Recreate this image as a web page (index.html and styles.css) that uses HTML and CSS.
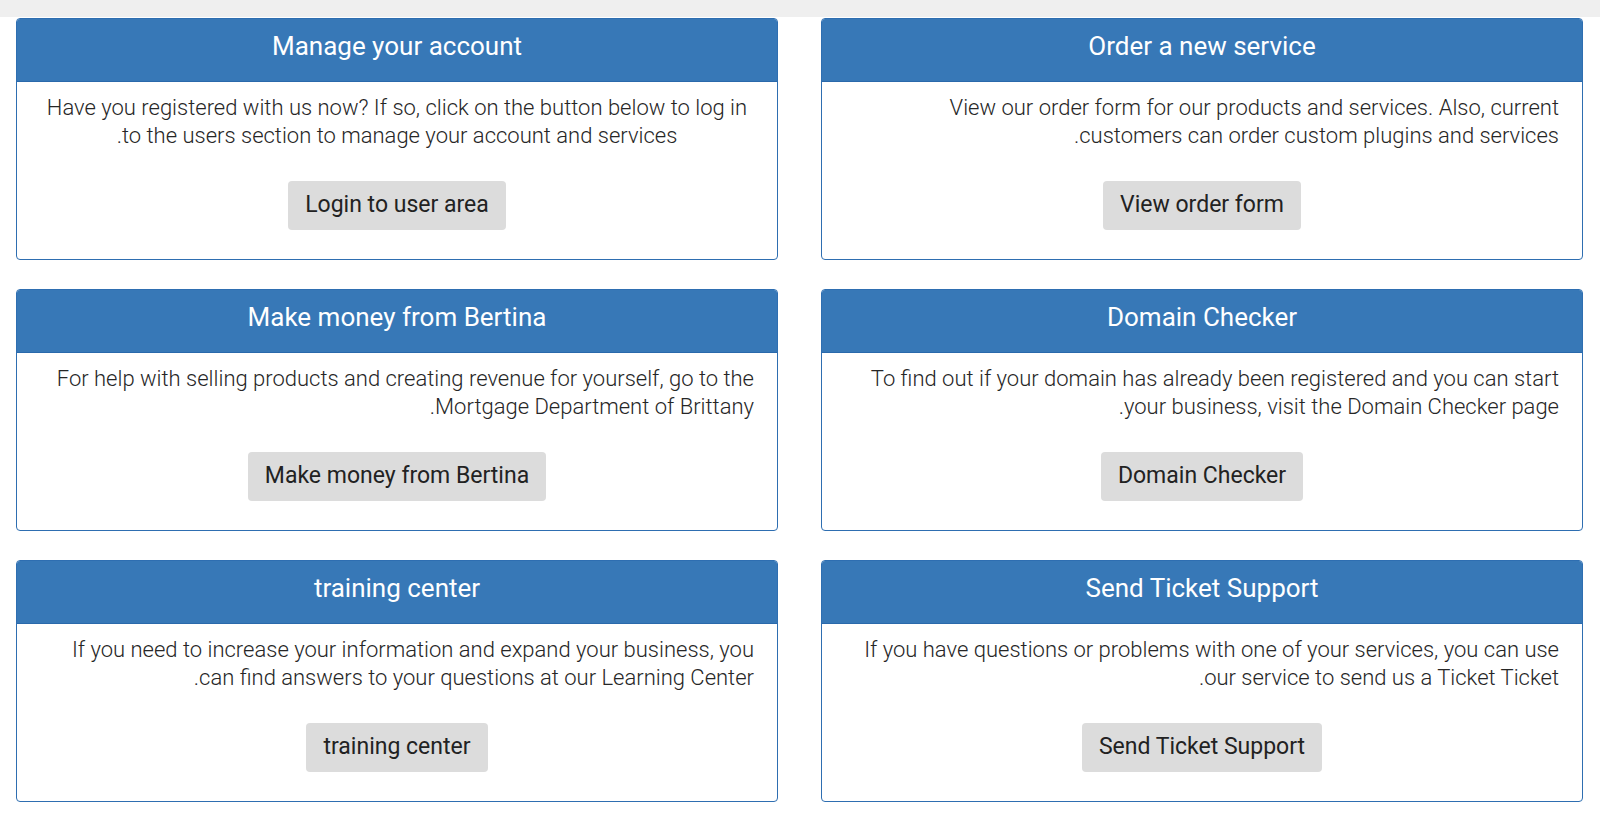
FILE: index.html
```html
<!DOCTYPE html>
<html lang="en">
<head>
<meta charset="utf-8">
<title>Services</title>
<link rel="stylesheet" href="styles.css">
</head>
<body>
<div class="topbar"></div>
<main class="grid">
  <section class="card">
    <h2 class="card-title">Manage your account</h2>
    <div class="card-body">
      <p class="card-text center">Have you registered with us now? If so, click on the button below to log in to the users section to manage your account and services.</p>
      <button class="btn">Login to user area</button>
    </div>
  </section>
  <section class="card">
    <h2 class="card-title">Order a new service</h2>
    <div class="card-body">
      <p class="card-text">View our order form for our products and services. Also, current customers can order custom plugins and services.</p>
      <button class="btn">View order form</button>
    </div>
  </section>
  <section class="card">
    <h2 class="card-title">Make money from Bertina</h2>
    <div class="card-body">
      <p class="card-text">For help with selling products and creating revenue for yourself, go to the Mortgage Department of Brittany.</p>
      <button class="btn">Make money from Bertina</button>
    </div>
  </section>
  <section class="card">
    <h2 class="card-title">Domain Checker</h2>
    <div class="card-body">
      <p class="card-text">To find out if your domain has already been registered and you can start your business, visit the Domain Checker page.</p>
      <button class="btn">Domain Checker</button>
    </div>
  </section>
  <section class="card">
    <h2 class="card-title">training center</h2>
    <div class="card-body">
      <p class="card-text">If you need to increase your information and expand your business, you can find answers to your questions at our Learning Center.</p>
      <button class="btn">training center</button>
    </div>
  </section>
  <section class="card">
    <h2 class="card-title">Send Ticket Support</h2>
    <div class="card-body">
      <p class="card-text">If you have questions or problems with one of your services, you can use our service to send us a Ticket Ticket.</p>
      <button class="btn">Send Ticket Support</button>
    </div>
  </section>
</main>
</body>
</html>
```

FILE: styles.css
```css
* { box-sizing: border-box; }

html, body {
  margin: 0;
  padding: 0;
  background: #ffffff;
  font-family: Roboto, "Liberation Sans", sans-serif;
}

.topbar {
  height: 17px;
  background: #efefef;
}

.grid {
  display: grid;
  grid-template-columns: 762px 762px;
  column-gap: 43px;
  row-gap: 29px;
  padding: 1px 17px 0 16px;
}

.card {
  border: 1px solid #2e6eb1;
  border-radius: 4px;
  overflow: hidden;
  display: flex;
  flex-direction: column;
}

.card-title {
  margin: 0;
  background: #3778b7;
  border-bottom: 1px solid #2a69ab;
  color: #ffffff;
  font-weight: 400;
  font-size: 26px;
  line-height: 31px;
  height: 63px;
  padding: 12px 10px 0;
  text-align: center;
}

.card-body {
  padding: 12px 23px 29px;
  display: flex;
  flex-direction: column;
  align-items: center;
}

.card-text {
  margin: 0;
  align-self: stretch;
  direction: rtl;
  text-align: right;
  font-weight: 300;
  font-size: 22px;
  line-height: 28px;
  color: #262626;
}

.card-text.center {
  text-align: center;
}

.btn {
  margin-top: 31px;
  border: none;
  border-radius: 4px;
  background: #dcdcdc;
  color: #222222;
  font-family: Roboto, "Liberation Sans", sans-serif;
  font-weight: 400;
  font-size: 23px;
  line-height: 27px;
  height: 49px;
  padding: 10px 17px 12px;
}
```
